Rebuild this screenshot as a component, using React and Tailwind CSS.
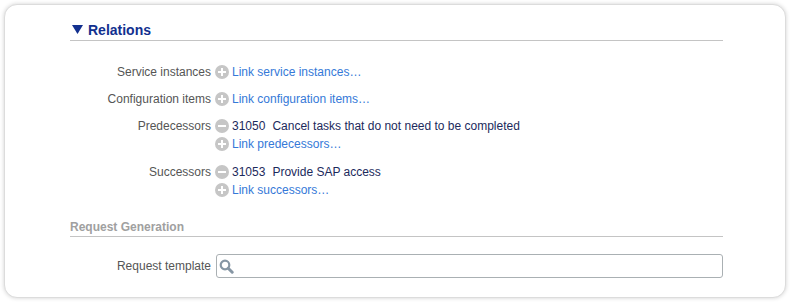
import React from 'react';

const font = { fontFamily: '"Liberation Sans", Arial, sans-serif' };

const CircleIcon = ({ minus }) => (
    <svg width="14" height="14" viewBox="0 0 14 14" className="shrink-0">
        <circle cx="7" cy="7" r="7" fill="#c6c6c6" />
        <rect x="3" y="6" width="8" height="2" fill="#ffffff" />
        {!minus && <rect x="6" y="3" width="2" height="8" fill="#ffffff" />}
    </svg>
);

const LinkLine = ({ text }) => (
    <div className="flex items-center h-[18px]">
        <CircleIcon />
        <span className="ml-[3px] text-[#3579d8] cursor-pointer">{text}</span>
    </div>
);

const TaskLine = ({ id, title }) => (
    <div className="flex items-center h-[18px]">
        <CircleIcon minus />
        <span className="ml-[3px] text-[#1c2a5c]">{id}</span>
        <span className="ml-[7px] text-[#1c2a5c]">{title}</span>
    </div>
);

const Row = ({ label, children, extra }) => (
    <div className={`flex ${extra ? 'pb-[1px]' : ''}`}>
        <div className="w-[141px] h-[18px] flex items-center justify-end text-[#555555]">{label}</div>
        <div className="ml-[4px] flex flex-col">{children}</div>
    </div>
);

const App = () => {
    return (
        <div className="w-[790px] h-[302px] bg-white p-[4px]" style={font}>
            <div className="w-[782px] h-[294px] rounded-[13px] border border-[#dcdcdc] shadow-[0_0_4px_rgba(0,0,0,0.18)] bg-white pt-[14px] pl-[65px]">
                <div className="w-[653px] text-[12px] leading-[18px]">
                    <div className="flex items-center h-[21px] border-b border-[#c4c4c4] box-content">
                        <svg width="11" height="9" viewBox="0 0 11 9" className="ml-[2px] mr-[5px]">
                            <polygon points="0,0 11,0 5.5,9" fill="#12308f" />
                        </svg>
                        <span className="text-[#12308f] text-[14px] font-bold">Relations</span>
                    </div>

                    <div className="mt-[22px] flex flex-col gap-[9px]">
                        <Row label="Service instances">
                            <LinkLine text="Link service instances…" />
                        </Row>
                        <Row label="Configuration items">
                            <LinkLine text="Link configuration items…" />
                        </Row>
                        <Row label="Predecessors" extra>
                            <TaskLine id="31050" title="Cancel tasks that do not need to be completed" />
                            <LinkLine text="Link predecessors…" />
                        </Row>
                        <Row label="Successors">
                            <TaskLine id="31053" title="Provide SAP access" />
                            <LinkLine text="Link successors…" />
                        </Row>
                    </div>

                    <div className="mt-[20px] h-[16px] leading-[16px] pb-[1px] box-content border-b border-[#c4c4c4] text-[#a0a0a0] font-bold">
                        Request Generation
                    </div>

                    <div className="mt-[17px] flex items-center">
                        <div className="w-[141px] text-right text-[#555555]">Request template</div>
                        <div className="ml-[5px] flex-1 h-[24px] border border-[#aab0b3] rounded-[3px] flex items-center pl-[2px]">
                            <svg width="15" height="15" viewBox="0 0 15 15">
                                <circle cx="6" cy="6" r="4.3" fill="none" stroke="#8696a4" strokeWidth="2.2" />
                                <line x1="9.2" y1="9.2" x2="13.2" y2="13.2" stroke="#8696a4" strokeWidth="3" strokeLinecap="round" />
                            </svg>
                        </div>
                    </div>
                </div>
            </div>
        </div>
    );
};

export default App;
